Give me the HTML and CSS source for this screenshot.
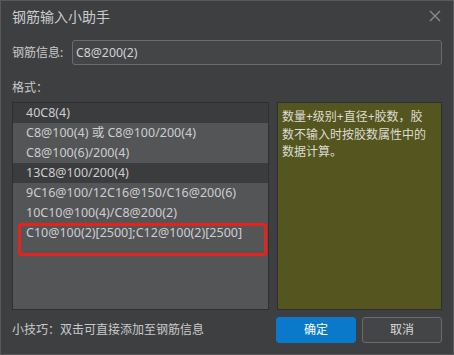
FILE: index.html
```html
<!DOCTYPE html>
<html lang="zh">
<head>
<meta charset="utf-8">
<title>钢筋输入小助手</title>
<link rel="stylesheet" href="styles.css">
</head>
<body>
<div class="dialog">
  <div class="titlebar">
    <span class="title">钢筋输入小助手</span>
    <svg class="close" width="12" height="12" viewBox="0 0 12 12"><path d="M1 1L11 11M11 1L1 11" stroke="#8c8d8f" stroke-width="1.3" fill="none"/></svg>
  </div>
  <div class="info-row">
    <span class="label">钢筋信息:</span>
    <div class="input">C8@200(2)</div>
  </div>
  <div class="format-label">格式：</div>
  <div class="main">
    <div class="list">
      <div class="row dark">40C8(4)</div>
      <div class="row">C8@100(4) 或 C8@100/200(4)</div>
      <div class="row">C8@100(6)/200(4)</div>
      <div class="row dark">13C8@100/200(4)</div>
      <div class="row">9C16@100/12C16@150/C16@200(6)</div>
      <div class="row">10C10@100(4)/C8@200(2)</div>
      <div class="row">C10@100(2)[2500];C12@100(2)[2500]</div>
      <div class="highlight"></div>
    </div>
    <div class="desc">数量+级别+直径+胶数，胶数不输入时按胶数属性中的数据计算。</div>
  </div>
  <div class="footer">
    <span class="tip">小技巧：双击可直接添加至钢筋信息</span>
    <div class="buttons">
      <div class="btn primary">确定</div>
      <div class="btn">取消</div>
    </div>
  </div>
</div>
</body>
</html>
```
FILE: styles.css
```css
html, body {
  margin: 0;
  padding: 0;
  background: #3e3f41;
}
body {
  font-family: "Noto Sans", "Noto Sans CJK SC", sans-serif;
  font-size: 12px;
  color: #c9cacb;
}
.dialog {
  width: 454px;
  height: 355px;
  box-sizing: border-box;
  border: 1px solid #58595b;
  background: #3e3f41;
  padding: 0 11px;
  display: flex;
  flex-direction: column;
}
.titlebar {
  height: 31px;
  display: flex;
  align-items: center;
  justify-content: space-between;
}
.title {
  font-size: 14px;
  line-height: 31px;
  color: #cacbcc;
}
.close {
  margin-right: 1px;
  margin-top: -1px;
}
.info-row {
  margin-top: 8px;
  height: 25px;
  display: flex;
  align-items: center;
}
.label {
  width: 60px;
  line-height: 16px;
}
.input {
  flex: 1;
  height: 25px;
  box-sizing: border-box;
  border: 1px solid #6a6b6d;
  border-radius: 3px;
  background: #444547;
  padding: 0 3px;
  line-height: 23px;
  font-size: 12.3px;
  color: #d2d3d4;
}
.format-label {
  margin-top: 15px;
  line-height: 16px;
  height: 16px;
}
.main {
  margin-top: 6px;
  height: 208px;
  display: flex;
  gap: 8px;
}
.list {
  position: relative;
  width: 257px;
  box-sizing: border-box;
  border: 1px solid #2e2f31;
  background: #545557;
}
.row {
  height: 20px;
  line-height: 20px;
  padding-left: 13px;
  white-space: nowrap;
  font-size: 12.5px;
  color: #cdcecf;
}
.row.dark {
  background: #3b3c3e;
}
.highlight {
  position: absolute;
  left: 5px;
  top: 120px;
  width: 249px;
  height: 33px;
  box-sizing: border-box;
  border: 3px solid #e5231b;
  border-radius: 3px;
}
.desc {
  flex: 1;
  box-sizing: border-box;
  border: 1px solid #2e2f31;
  background: #55561f;
  padding: 5px 9px 5px 4px;
  line-height: 17.5px;
  color: #dcdcd2;
}
.footer {
  margin-top: 7px;
  height: 26px;
  display: flex;
  align-items: center;
  justify-content: space-between;
}
.tip {
  line-height: 16px;
  color: #c9cacb;
}
.buttons {
  display: flex;
  gap: 6px;
}
.btn {
  width: 80px;
  height: 26px;
  box-sizing: border-box;
  border: 1px solid #6a6b6d;
  border-radius: 3px;
  background: #444547;
  text-align: center;
  line-height: 24px;
  color: #d8d9da;
}
.btn.primary {
  background: #0a79c9;
  border-color: #0a79c9;
  color: #ffffff;
}
```
